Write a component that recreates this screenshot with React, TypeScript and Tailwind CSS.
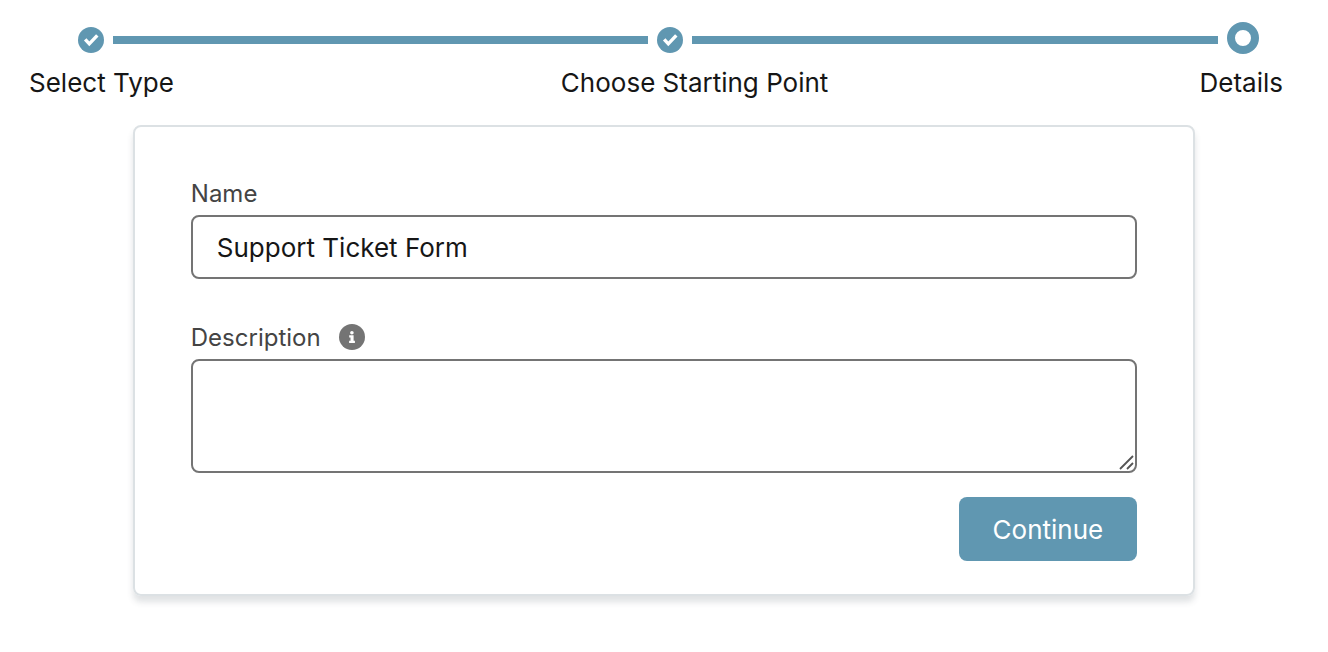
import { useState } from 'react';
import type { FormEvent } from 'react';

export default function App() {
    const [name, setName] = useState('Support Ticket Form');
    const [description, setDescription] = useState('');

    const handleSubmit = (event: FormEvent) => {
        event.preventDefault();
    };

    return (
        <main className="min-h-screen bg-white pt-[22px] pb-14 font-['Inter',sans-serif] text-[#161616]">
            <Stepper />

            <form
                onSubmit={handleSubmit}
                className="mx-auto mt-6 w-4/5 rounded-lg border-2 border-[#dce1e4] px-14 pt-[50px] pb-[33px] shadow-[0_6px_6px_rgba(60,75,85,0.16)]"
            >
                <label htmlFor="name" className="block h-[38px] text-2xl leading-[34px] text-[#444444]">
                    Name
                </label>
                <input
                    id="name"
                    type="text"
                    value={name}
                    onChange={(event) => setName(event.target.value)}
                    className="block h-16 w-full rounded-lg border-2 border-[#747474] px-6 text-[26px] text-[#161616]"
                />

                <div className="mt-[42px] flex h-[38px] items-start gap-[18px]">
                    <label htmlFor="description" className="text-2xl leading-[34px] text-[#444444]">
                        Description
                    </label>
                    <button type="button" aria-label="About the description" className="flex h-8 items-center">
                        <InfoIcon />
                    </button>
                </div>
                <div className="relative">
                    <textarea
                        id="description"
                        value={description}
                        onChange={(event) => setDescription(event.target.value)}
                        className="block h-[114px] w-full resize-none rounded-lg border-2 border-[#747474] px-6 py-3 text-[26px]"
                    />
                    <ResizeGrip />
                </div>

                <div className="mt-6 flex justify-end">
                    <button type="submit" className="h-16 rounded-lg bg-[#6097b1] px-[34px] text-[26px] text-white">
                        Continue
                    </button>
                </div>
            </form>
        </main>
    );
}

function Stepper() {
    return (
        <nav aria-label="Progress">
            <div className="flex items-center gap-[9px] pr-[69px] pl-[78px]" aria-hidden="true">
                <CheckIcon />
                <div className="h-2 grow-[535] bg-[#6097b1]" />
                <CheckIcon />
                <div className="h-2 grow-[527] bg-[#6097b1]" />
                <RingIcon />
            </div>
            <ol className="flex pt-[7px] pr-[45px] pl-[29px] text-[26px] leading-9">
                <li className="grow-[390]">Select Type</li>
                <li className="grow-[374]">Choose Starting Point</li>
                <li aria-current="step">Details</li>
            </ol>
        </nav>
    );
}

function CheckIcon() {
    return (
        <svg viewBox="0 0 26 26" className="size-[26px] shrink-0">
            <circle cx="13" cy="13" r="13" fill="#6097b1" />
            <path d="M7.2 12.4l4.1 4.4L19.3 8.4" fill="none" stroke="#fff" strokeWidth="3.4" />
        </svg>
    );
}

function RingIcon() {
    return (
        <svg viewBox="0 0 32 36" className="h-9 w-8 shrink-0">
            <circle cx="16" cy="16" r="12" fill="none" stroke="#6097b1" strokeWidth="8" />
        </svg>
    );
}

function InfoIcon() {
    return (
        <svg viewBox="0 0 26 26" className="size-[26px]" aria-hidden="true">
            <circle cx="13" cy="13" r="13" fill="#747474" />
            <circle cx="12.9" cy="8.7" r="1.8" fill="#fff" />
            <path d="M10.2 11.2h4.4v5.5h1.3v2.3h-5.8v-2.3h1.4v-3.2h-1.3z" fill="#fff" />
        </svg>
    );
}

function ResizeGrip() {
    return (
        <svg
            viewBox="0 0 16 16"
            className="pointer-events-none absolute right-[2px] bottom-[2px] size-4"
            aria-hidden="true"
        >
            <path d="M1 14L14 1M8 14L14 8" fill="none" stroke="#555" strokeWidth="1.8" />
        </svg>
    );
}
